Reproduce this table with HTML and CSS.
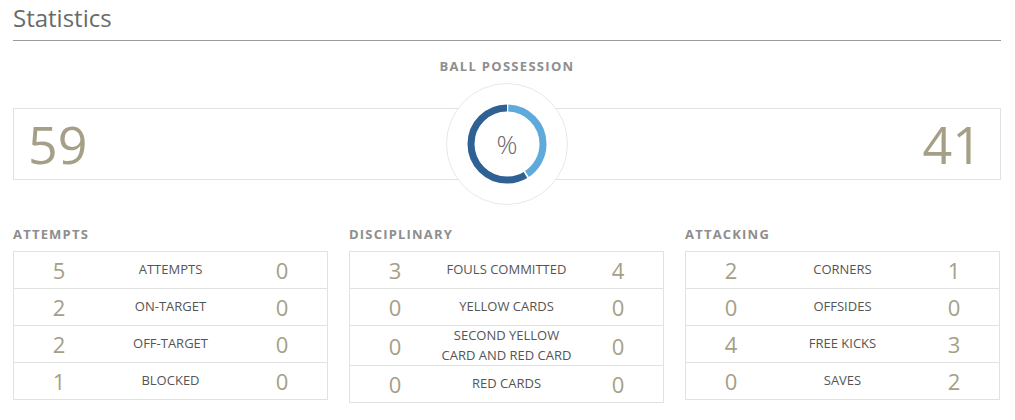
FILE: index.html
```html
<!DOCTYPE html>
<html>
<head>
<meta charset="utf-8">
<link rel="stylesheet" href="styles.css">
</head>
<body>
<div class="page">
  <h1 class="title">Statistics</h1>
  <section class="possession">
    <h2 class="poss-head">BALL POSSESSION</h2>
    <div class="poss-wrap">
      <div class="poss-box">
        <span class="poss-num">59</span>
        <span class="poss-num">41</span>
      </div>
      <div class="poss-circle">
        <svg class="donut" width="82" height="82" viewBox="0 0 82 82">
          <circle cx="41" cy="41" r="36" fill="none" stroke="#2f6194" stroke-width="7" stroke-dasharray="132.5 226.2" stroke-dashoffset="-93.5" transform="rotate(-90 41 41)"/>
          <circle cx="41" cy="41" r="36" fill="none" stroke="#5eaadd" stroke-width="7" stroke-dasharray="90.5 226.2" stroke-dashoffset="-1.3" transform="rotate(-90 41 41)"/>
        </svg>
        <span class="pct">%</span>
      </div>
    </div>
  </section>
  <div class="groups">
    <div class="group">
      <h3 class="group-head">ATTEMPTS</h3>
      <div class="table">
        <div class="row"><span class="n">5</span><span class="lbl">ATTEMPTS</span><span class="n">0</span></div>
        <div class="row"><span class="n">2</span><span class="lbl">ON-TARGET</span><span class="n">0</span></div>
        <div class="row"><span class="n">2</span><span class="lbl">OFF-TARGET</span><span class="n">0</span></div>
        <div class="row"><span class="n">1</span><span class="lbl">BLOCKED</span><span class="n">0</span></div>
      </div>
    </div>
    <div class="group">
      <h3 class="group-head">DISCIPLINARY</h3>
      <div class="table">
        <div class="row"><span class="n">3</span><span class="lbl">FOULS COMMITTED</span><span class="n">4</span></div>
        <div class="row"><span class="n">0</span><span class="lbl">YELLOW CARDS</span><span class="n">0</span></div>
        <div class="row"><span class="n">0</span><span class="lbl">SECOND YELLOW<br>CARD AND RED CARD</span><span class="n">0</span></div>
        <div class="row"><span class="n">0</span><span class="lbl">RED CARDS</span><span class="n">0</span></div>
      </div>
    </div>
    <div class="group">
      <h3 class="group-head">ATTACKING</h3>
      <div class="table">
        <div class="row"><span class="n">2</span><span class="lbl">CORNERS</span><span class="n">1</span></div>
        <div class="row"><span class="n">0</span><span class="lbl">OFFSIDES</span><span class="n">0</span></div>
        <div class="row"><span class="n">4</span><span class="lbl">FREE KICKS</span><span class="n">3</span></div>
        <div class="row"><span class="n">0</span><span class="lbl">SAVES</span><span class="n">2</span></div>
      </div>
    </div>
  </div>
</div>
</body>
</html>
```

FILE: styles.css
```css
* { box-sizing: border-box; }
html, body { margin: 0; padding: 0; background: #fff; }
body { font-family: "Open Sans", "Liberation Sans", sans-serif; }
.page { width: 1015px; padding: 0 14px 0 13px; }
.title {
  margin: 0;
  padding-top: 3px;
  font-size: 24px;
  font-weight: 400;
  line-height: 30px;
  color: #6a6a6a;
  height: 41px;
  border-bottom: 1px solid #9a9a9a;
}
.possession { padding-top: 16px; }
.poss-head {
  margin: 0;
  text-align: center;
  font-size: 13px;
  font-weight: 700;
  letter-spacing: 1.3px;
  color: #8e8e8e;
  line-height: 18px;
}
.poss-wrap { position: relative; margin-top: 33px; }
.poss-box {
  height: 72px;
  border: 1px solid #e2e2e2;
  display: flex;
  justify-content: space-between;
  align-items: center;
  padding: 0 18px 0 14px;
}
.poss-num {
  font-size: 52px;
  font-weight: 400;
  color: #a59f87;
  line-height: 60px;
}
.poss-circle {
  position: absolute;
  left: 50%;
  top: 50%;
  width: 122px;
  height: 122px;
  margin: -61px 0 0 -61px;
  border-radius: 50%;
  background: #fff;
  border: 1px solid #e8e8e8;
  display: flex;
  align-items: center;
  justify-content: center;
}
.donut { position: absolute; left: 19px; top: 19px; }
.pct {
  position: relative;
  font-size: 26px;
  font-weight: 300;
  color: #6a6a6a;
}
.groups {
  display: grid;
  grid-template-columns: 315px 315px 315px;
  column-gap: 21px;
  margin-top: 45px;
}
.group-head {
  margin: 0 0 8px 0;
  font-size: 13px;
  font-weight: 700;
  letter-spacing: 1.2px;
  color: #8e8e8e;
  line-height: 18px;
}
.table { border: 1px solid #e2e2e2; border-bottom: 0; }
.row {
  display: grid;
  grid-template-columns: 90px 1fr 90px;
  align-items: center;
  min-height: 37px;
  border-bottom: 1px solid #e2e2e2;
}
.n {
  text-align: center;
  font-size: 22px;
  color: #a59f87;
  line-height: 36px;
}
.lbl {
  text-align: center;
  font-size: 13px;
  color: #555;
  line-height: 19.5px;
}
```
